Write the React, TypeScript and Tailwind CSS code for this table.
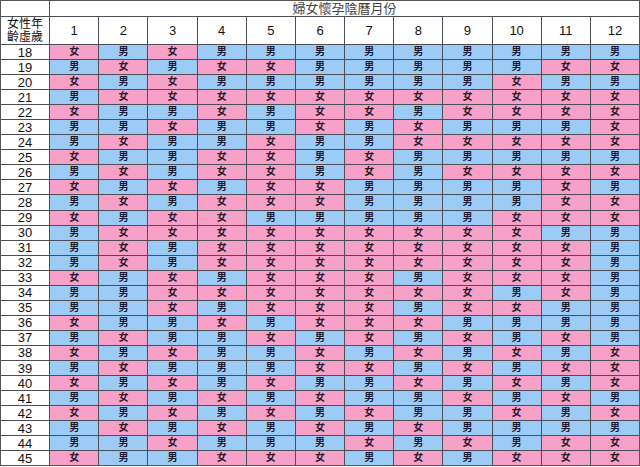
import React from "react";

// 男 = boy, 女 = girl. One string per age row, months 1-12.
const chart: [number, string][] = [
  [18, "女男女男男男男男男男男男"],
  [19, "男女男女女男男男男男女女"],
  [20, "女男女男男男男男男女男男"],
  [21, "男女女女女女女女女女女女"],
  [22, "女男男女男女女男女女女女"],
  [23, "男男女男男女男女男男男女"],
  [24, "男女男男女男男女女女女女"],
  [25, "女男男女女男女男男男男男"],
  [26, "男女男女女男女男女女女女"],
  [27, "女男女男女女男男男男女男"],
  [28, "男女男女女女男男男男女女"],
  [29, "女男女女男男男男男女女女"],
  [30, "男女女女女女女女女女男男"],
  [31, "男女男女女女女女女女女男"],
  [32, "男女男女女女女女女女女男"],
  [33, "女男女男女女女男女女女男"],
  [34, "男男女女女女女女女男女男"],
  [35, "男男女男女女女男女女男男"],
  [36, "女男男女男女女女男男男男"],
  [37, "男女男男女男女男女男女男"],
  [38, "女男女男男女男女男女男女"],
  [39, "男女男男男女女男女男女女"],
  [40, "女男女男女男男女男女男女"],
  [41, "男女男女男女男男女男女男"],
  [42, "女男女男女男女男男女男女"],
  [43, "男女男女男女男女男男男男"],
  [44, "男男女男男男女男女男女女"],
  [45, "女男男女女女男女男女女女"],
];

const months = [1, 2, 3, 4, 5, 6, 7, 8, 9, 10, 11, 12];

export default function App() {
  return (
    <div
      className="w-[640px] h-[467px] bg-white"
      style={{ fontFamily: '"Liberation Sans", "Noto Sans CJK TC", sans-serif' }}
    >
      <div className="grid w-[640px] grid-cols-[repeat(13,1fr)] grid-rows-[15px_27px_repeat(28,14.05px)] gap-px border border-[#555] bg-[#4d4d55]">
        <div className="bg-white" />
        <div className="col-span-12 flex items-center justify-center bg-white text-[13px] leading-none text-[#444]">
          婦女懷孕陰曆月份
        </div>

        <div className="flex flex-col items-center justify-center bg-white text-[12px] leading-[13px] text-[#111]">
          <span>女性年</span>
          <span>齡虛歲</span>
        </div>
        {months.map((m) => (
          <div key={m} className="flex items-center justify-center bg-white text-[13px] text-[#111]">
            {m}
          </div>
        ))}

        {chart.map(([age, row]) => (
          <React.Fragment key={age}>
            <div className="flex items-center justify-center bg-white text-[13px] leading-none text-[#111]">
              {age}
            </div>
            {row.split("").map((g, i) => (
              <div
                key={i}
                className={
                  g === "女"
                    ? "flex items-center justify-center bg-[#f7a0c8] text-[10px] font-bold leading-none text-[#2a1a2a]"
                    : "flex items-center justify-center bg-[#9ccbf6] text-[10px] font-bold leading-none text-[#1a1a33]"
                }
              >
                {g}
              </div>
            ))}
          </React.Fragment>
        ))}
      </div>
    </div>
  );
}
